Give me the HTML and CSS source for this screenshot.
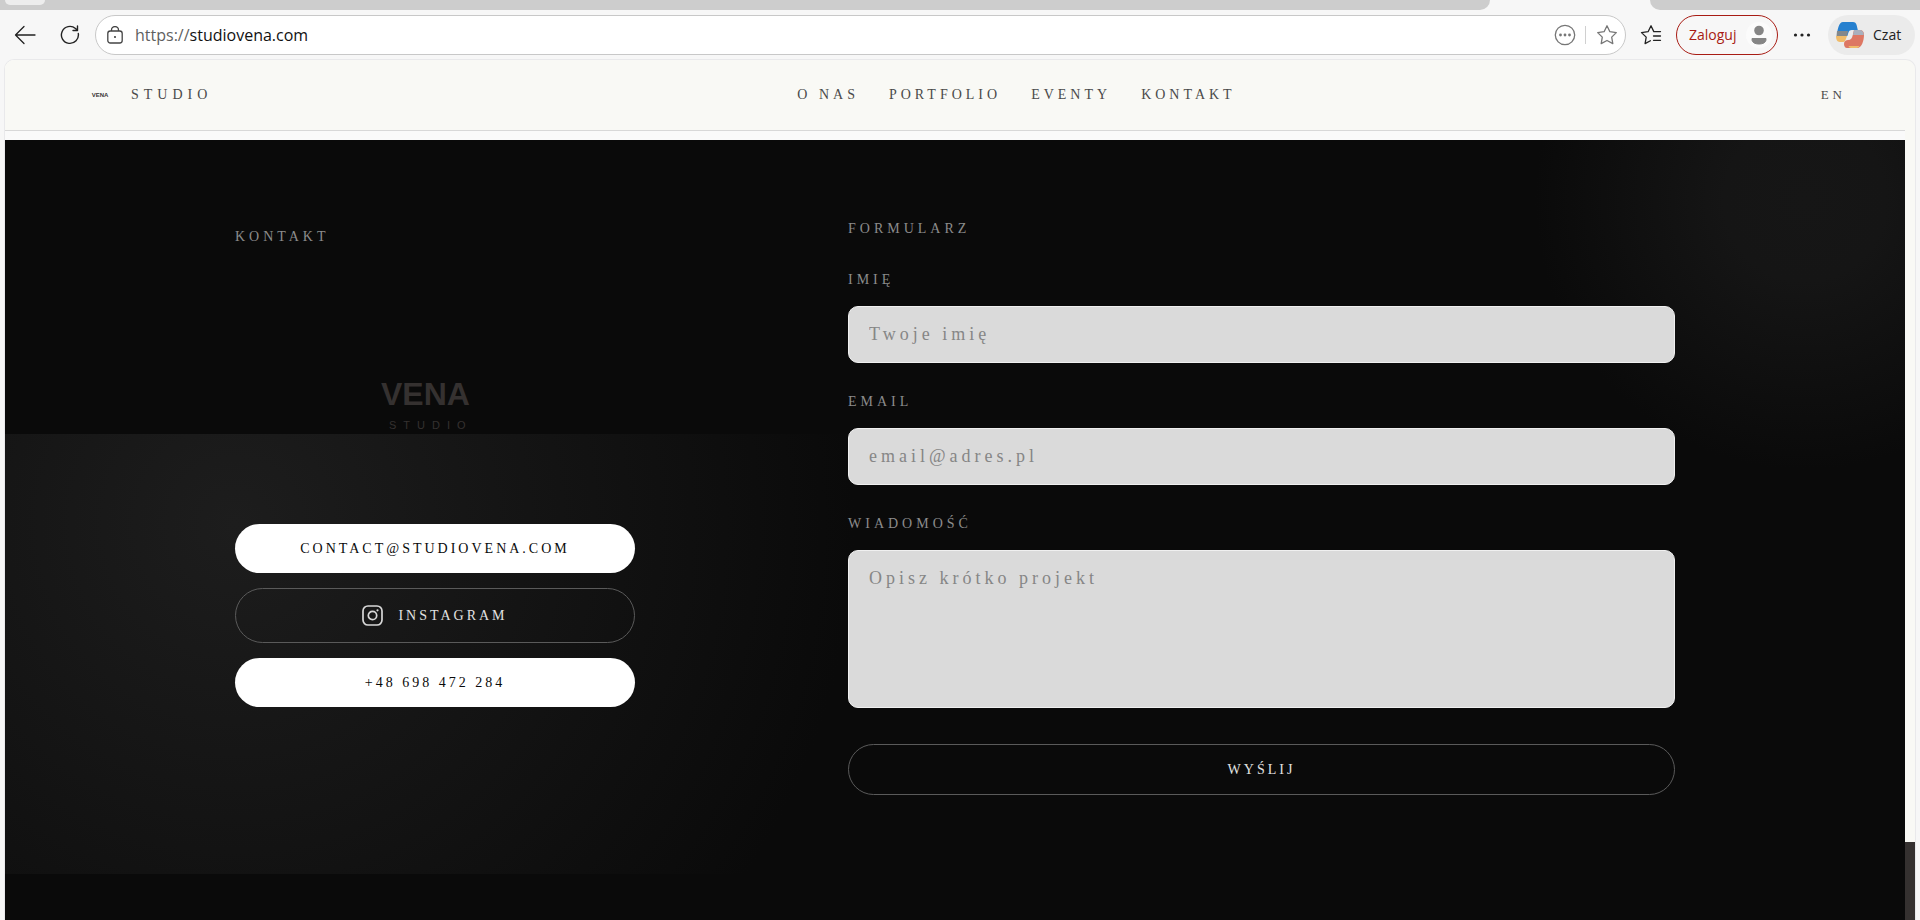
FILE: index.html
```
<!DOCTYPE html>
<html lang="pl">
<head>
    <meta charset="UTF-8">
    <meta name="viewport" content="width=device-width, initial-scale=1.0">
    <title>Studio Vena</title>
    <link rel="stylesheet" href="styles.css">
</head>
<body>

<div class="tabs">
    <div class="tabs-left"><span class="tab-pill"></span></div>
    <div class="tabs-right"></div>
</div>

<div class="toolbar">
    <button type="button" class="tool" aria-label="Wstecz">
        <svg width="22" height="20" viewBox="0 0 22 20" fill="none" stroke="#222" stroke-width="1.3" stroke-linecap="round" stroke-linejoin="round"><path d="M21 10H1.5M10 1.5L1.5 10l8.500 8.500"/></svg>
    </button>
    <button type="button" class="tool" aria-label="Odśwież">
        <svg width="20" height="20" viewBox="0 0 20 20" fill="none" stroke="#222" stroke-width="1.4" stroke-linecap="round" stroke-linejoin="round"><path d="M18.300 8.500A8.500 8.500 0 1 1 15.500 3.500L17.500 5.300M17.500 1v4.500h-4.500"/></svg>
    </button>
    <div class="address">
        <svg width="16" height="18" viewBox="0 0 16 18" fill="none" stroke="#444" stroke-width="1.300"><rect x="0.800" y="5" width="14.400" height="12" rx="2.500"/><path d="M4.500 5V4a3.500 3.500 0 0 1 7 0v1"/><circle cx="8" cy="11" r="0.900" fill="#222" stroke="none"/></svg>
        <div class="url"><span class="scheme">https://</span>studiovena.com</div>
        <button type="button" class="tool" aria-label="Więcej opcji">
            <svg width="22" height="22" viewBox="0 0 22 22" fill="none" stroke="#767676" stroke-width="1.300"><circle cx="11" cy="11" r="9.700"/><g fill="#767676" stroke="none"><circle cx="6.500" cy="11" r="1.400"/><circle cx="11" cy="11" r="1.400"/><circle cx="15.500" cy="11" r="1.400"/></g></svg>
        </button>
        <span class="divider"></span>
        <button type="button" class="tool" aria-label="Dodaj do ulubionych">
            <svg width="22" height="22" viewBox="0 0 22 22" fill="none" stroke="#767676" stroke-width="1.300" stroke-linejoin="round"><path d="M11 1.800l2.900 5.900 6.400.9-4.600 4.500 1.100 6.500L11 16.500l-5.800 3.100 1.100-6.500L1.700 8.600l6.400-.9z"/></svg>
        </button>
    </div>
    <button type="button" class="tool" aria-label="Ulubione">
        <svg width="22" height="22" viewBox="0 0 22 22" fill="none" stroke="#222" stroke-width="1.300" stroke-linecap="round" stroke-linejoin="round"><path d="M20.500 7.600H13.800L11 1.800 8.100 7.700l-6.600.9 4.700 4.500-1.100 6.500 5.300-2.900M13.500 12h7M13.500 16.300h7"/></svg>
    </button>
    <button type="button" class="login">
        Zaloguj
        <svg width="28" height="28" viewBox="0 0 28 28"><circle cx="14" cy="14" r="13" fill="#fbfbfb"/><circle cx="14" cy="9.500" r="4.800" fill="#858585"/><path d="M7 17.500h14v1c0 3-3 4.500-7 4.500s-7-1.500-7-4.500z" fill="#858585" stroke="#858585" stroke-linejoin="round"/></svg>
    </button>
    <button type="button" class="tool" aria-label="Ustawienia">
        <svg width="18" height="6" viewBox="0 0 18 6" fill="#222"><circle cx="2.500" cy="3" r="1.600"/><circle cx="9" cy="3" r="1.600"/><circle cx="15.500" cy="3" r="1.600"/></svg>
    </button>
    <button type="button" class="chat">
        <svg width="28" height="26" viewBox="0 0 28 26">
            <path d="M7 0h10c2 0 3 1 3.600 3l1.200 5h-6c-2 0-3 1-3.500 3l-1 3H1C1 8 3 0 7 0z" fill="#2680cf"/>
            <path d="M1 9h11l-1 5H0.500z" fill="#82878b"/>
            <path d="M0 14h11l-1.500 4c-.5 1.500-1.500 2-3 2H4c-3 0-4-3-4-6z" fill="#f0bb69"/>
            <path d="M18 8h5c4 0 5 2 5 5 0 5-2 13-7 13H11c-2 0-3-2-3-4 0-3 2-4 4-4 3 0 4-2 4.500-4z" fill="#dd7763"/>
            <path d="M18 8h5c3.500 0 4.500 2 4.800 5H17z" fill="#a9b0bd"/>
            <path d="M12.500 24h11c-1 1.500-2 2-3.500 2h-5c-1.500 0-2-.8-2.500-2z" fill="#f0bb69"/>
        </svg>
        Czat
    </button>
</div>

<div class="page">
    <div class="content">
        <header class="header">
            <a href="#" class="brand">
                <svg class="brand-logo" width="56" height="18" viewBox="0 0 56 18" role="img" aria-label="Vena"><text x="36" y="12" text-anchor="middle">VENA</text></svg>
                STUDIO
            </a>
            <nav class="nav">
                <a href="#">O NAS</a>
                <a href="#">PORTFOLIO</a>
                <a href="#">EVENTY</a>
                <a href="#">KONTAKT</a>
            </nav>
            <a href="#" class="lang">EN</a>
        </header>

        <main class="contact">
            <div class="contact-grid">
                <section class="info">
                    <h2 class="title">KONTAKT</h2>
                    <svg class="logo" width="108" height="74" viewBox="0 0 108 74" role="img" aria-label="Vena Studio">
                        <text class="logo-name" x="0" y="46">VENA</text>
                        <text class="logo-sub" x="8" y="70">STUDIO</text>
                    </svg>
                    <div class="links">
                        <a class="btn btn-light" href="mailto:contact@studiovena.com">CONTACT@STUDIOVENA.COM</a>
                        <a class="btn btn-outline" href="#">
                            <svg width="21" height="21" viewBox="0 0 21 21" fill="none" stroke="#d8d8d8" stroke-width="1.700"><rect x="1" y="1" width="19" height="19" rx="5"/><circle cx="10.500" cy="10.500" r="4.200"/><circle cx="15.500" cy="5.300" r="1.100" fill="#d8d8d8" stroke="none"/></svg>
                            INSTAGRAM
                        </a>
                        <a class="btn btn-light" href="tel:+48698472284">+48 698 472 284</a>
                    </div>
                </section>

                <form class="form">
                    <h2 class="title">FORMULARZ</h2>
                    <label for="name">IMIĘ</label>
                    <input type="text" id="name" placeholder="Twoje imię">
                    <label for="email">EMAIL</label>
                    <input type="email" id="email" placeholder="email@adres.pl">
                    <label for="message">WIADOMOŚĆ</label>
                    <textarea id="message" placeholder="Opisz krótko projekt"></textarea>
                    <button type="submit" class="btn btn-outline">WYŚLIJ</button>
                </form>
            </div>
        </main>
    </div>
    <div class="scrollbar"><div class="thumb"></div></div>
</div>

</body>
</html>
```
FILE: styles.css
```
* {
    box-sizing: border-box;
}
body {
    margin: 0;
    height: 100vh;
    display: flex;
    flex-direction: column;
    overflow: hidden;
    background-color: #F7F7F7;
    font-family: "Liberation Serif", "Times New Roman", serif;
    font-size: 14px;
    line-height: 17px;
}
a {
    color: inherit;
    text-decoration: none;
}
button {
    font: inherit;
    cursor: pointer;
}
svg {
    display: block;
    flex: none;
}

/* Browser bar */
.tabs {
    display: flex;
    justify-content: space-between;
    gap: 160px;
    height: 10px;
    flex: none;
}
.tabs-left {
    flex: 1;
    padding-left: 5px;
    background-color: #CDCDCD;
    border-radius: 0 0 10px 0;
}
.tabs-right {
    width: 270px;
    background-color: #CDCDCD;
    border-radius: 0 0 0 10px;
}
.tab-pill {
    display: block;
    width: 40px;
    height: 5px;
    background-color: #EDEDED;
    border-radius: 0 0 8px 8px;
}
.toolbar {
    display: flex;
    align-items: center;
    flex: none;
    height: 49px;
    padding: 0 5px 0 14px;
    font-family: "Open Sans", "Noto Sans", sans-serif;
    font-size: 15px;
    color: #222;
}
.tool {
    padding: 0;
    border: none;
    background: none;
}
.toolbar > .tool + .tool {
    margin-left: 24px;
}
.address {
    flex: 1;
    display: flex;
    align-items: center;
    height: 40px;
    margin: 0 14px 0 15px;
    padding: 0 7px 0 11px;
    background-color: #FFF;
    border: 1px solid #C8C8C8;
    border-radius: 20px;
}
.url {
    flex: 1;
    margin-left: 12px;
    font-size: 16px;
    line-height: 22px;
    color: #111;
}
.scheme {
    color: #5F5F5F;
}
.divider {
    width: 1px;
    height: 18px;
    margin: 0 10px 0 9px;
    background-color: #D0D0D0;
}
.login {
    display: flex;
    align-items: center;
    justify-content: space-between;
    width: 102px;
    height: 40px;
    margin: 0 15px 0 14px;
    padding: 0 4px 0 12px;
    font-size: 14px;
    color: #A81C14;
    background: none;
    border: 1px solid #A81C14;
    border-radius: 20px;
}
.chat {
    display: flex;
    align-items: center;
    gap: 9px;
    width: 87px;
    height: 40px;
    margin-left: 17px;
    padding: 0 8px;
    font-size: 14px;
    color: #222;
    background-color: #EBEBEB;
    border: none;
    border-radius: 20px;
}

/* Page */
.page {
    flex: 1;
    display: flex;
    min-height: 0;
    margin: 0 4px;
    overflow: hidden;
    background-color: #F9F9F5;
    border: 1px solid #E9E9EB;
    border-bottom: none;
    border-radius: 10px 10px 0 0;
}
.content {
    flex: 1;
    display: flex;
    flex-direction: column;
    background-color: #FAFAFA;
}
.scrollbar {
    width: 10px;
    display: flex;
    flex-direction: column;
    justify-content: flex-end;
}
.thumb {
    height: 78px;
    background-color: #353130;
}
.header {
    display: flex;
    align-items: center;
    justify-content: space-between;
    height: 71px;
    flex: none;
    margin-bottom: 9px;
    padding: 0 59px 2px;
    color: #4A4A4A;
    background-color: #F9F9F5;
    border-bottom: 1px solid #D8D8D8;
}
.brand {
    display: flex;
    align-items: center;
    gap: 11px;
    letter-spacing: 5px;
}
.brand-logo {
    fill: #3A3636;
    font-family: "Liberation Sans", Arial, sans-serif;
    font-size: 6px;
    font-weight: bold;
    letter-spacing: 0;
}
.nav {
    display: flex;
    gap: 30px;
    letter-spacing: 4px;
}
.lang {
    font-size: 13px;
    letter-spacing: 4px;
}

/* Contact */
.contact {
    flex: 1;
    padding: 80px 24px;
    background-color: #0A0A0A;
    background-image:
        radial-gradient(circle 270px at calc(100% - 100px) 60px, #161616, #151515 30%, #0A0A0A),
        radial-gradient(circle 620px at 230px 90px, #1D1D1D, #0A0A0A);
    background-position: 100% 0, 0 294px;
    background-size: 400px 400px, calc(100% - 400px) 440px;
    background-repeat: no-repeat;
}
.contact-grid {
    display: grid;
    grid-template-columns: 400px 1fr;
    gap: 213px;
    max-width: 1440px;
    margin: 0 auto;
}
.title {
    margin: 0;
    font-size: 14px;
    font-weight: normal;
    letter-spacing: 4px;
    color: #8C8C8C;
}
.info {
    padding-top: 8px;
}
.logo {
    margin: 114px auto 91px;
    fill: #353130;
    font-family: "Liberation Sans", Arial, sans-serif;
}
.logo-name {
    font-size: 32px;
    font-weight: bold;
}
.logo-sub {
    font-size: 11px;
    letter-spacing: 7px;
}
.links {
    display: flex;
    flex-direction: column;
    gap: 15px;
}
.btn {
    display: flex;
    align-items: center;
    justify-content: center;
    gap: 15px;
    padding: 16px;
    letter-spacing: 3px;
    border-radius: 28px;
}
.btn-light {
    color: #0A0A0A;
    background-color: #FFF;
}
.btn-outline {
    color: #E2E2E2;
    background: none;
    border: 1px solid #5A5A5A;
}
.form {
    display: flex;
    flex-direction: column;
}
.form .title {
    margin-bottom: 34px;
}
.form label {
    margin-bottom: 18px;
    letter-spacing: 4px;
    color: #8C8C8C;
}
.form input,
.form textarea {
    width: 100%;
    height: 57px;
    margin: 0 0 30px;
    padding: 17px 20px;
    font-family: inherit;
    font-size: 18px;
    line-height: 21px;
    letter-spacing: 4px;
    color: #0A0A0A;
    background-color: #DADADA;
    border: 1px solid #F0F0F0;
    border-radius: 10px;
    outline: none;
}
.form textarea {
    height: 158px;
    margin-bottom: 36px;
    resize: none;
}
.form ::placeholder {
    color: #868686;
    opacity: 1;
}
```
